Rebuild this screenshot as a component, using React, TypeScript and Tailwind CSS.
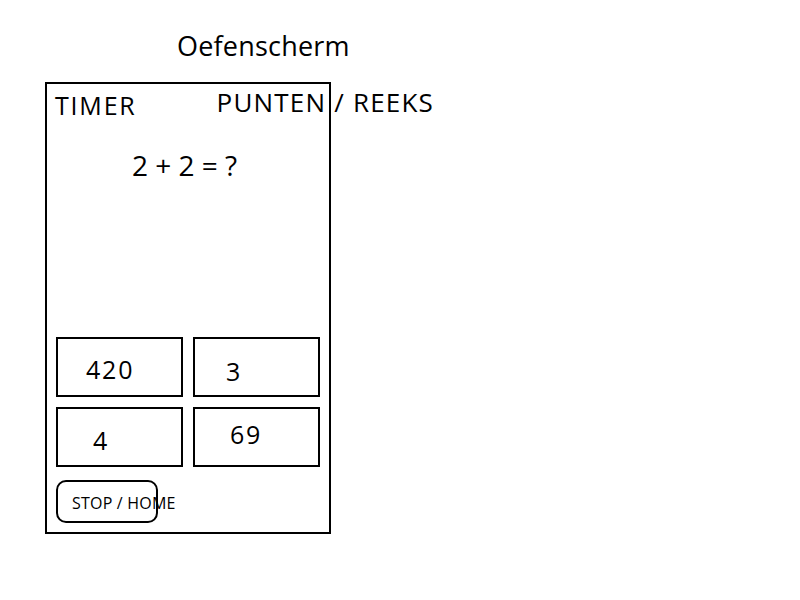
const answers = [
  { value: '420', pad: 'pl-[28px] pt-[14px]' },
  { value: '3', pad: 'pl-[31px] pt-[16px]' },
  { value: '4', pad: 'pl-[35px] pt-[15px]' },
  { value: '69', pad: 'pl-[35px] pt-[9px]' },
];

export default function App() {
  return (
    <div className="w-[800px] h-[600px] bg-white text-black font-['Open_Sans',sans-serif]">
      <div className="pt-[28px] pl-[177px] text-[27px] leading-[36px] tracking-[0.2px]">Oefenscherm</div>

      <div className="ml-[45px] mt-[18px] w-[286px] h-[452px] border-2 border-black flex flex-col">
        <div className="flex items-start pl-[8px] pt-[2px] whitespace-nowrap">
          <span className="mt-[3px] text-[25px] leading-[32px] tracking-[1.8px]">TIMER</span>
          <span className="ml-[80px] text-[26px] leading-[32px] tracking-[1.2px]">PUNTEN / REEKS</span>
        </div>

        <div className="mt-[26px] text-center text-[28px] leading-[36px] pr-[7px]">2 + 2 = ?</div>

        <div className="mt-auto px-[9px] grid grid-cols-2 gap-x-[10px] gap-y-[10px]">
          {answers.map((a) => (
            <div
              key={a.value}
              className={`h-[60px] border-2 border-black text-[25px] leading-[32px] tracking-[1.8px] ${a.pad}`}
            >
              {a.value}
            </div>
          ))}
        </div>

        <div className="mt-[13px] mb-[9px] ml-[9px]">
          <div className="w-[102px] h-[43px] border-2 border-black rounded-[10px] pl-[14px] pt-[2px] flex items-center whitespace-nowrap text-[16px] tracking-[0.2px]">
            STOP / HOME
          </div>
        </div>
      </div>
    </div>
  );
}
